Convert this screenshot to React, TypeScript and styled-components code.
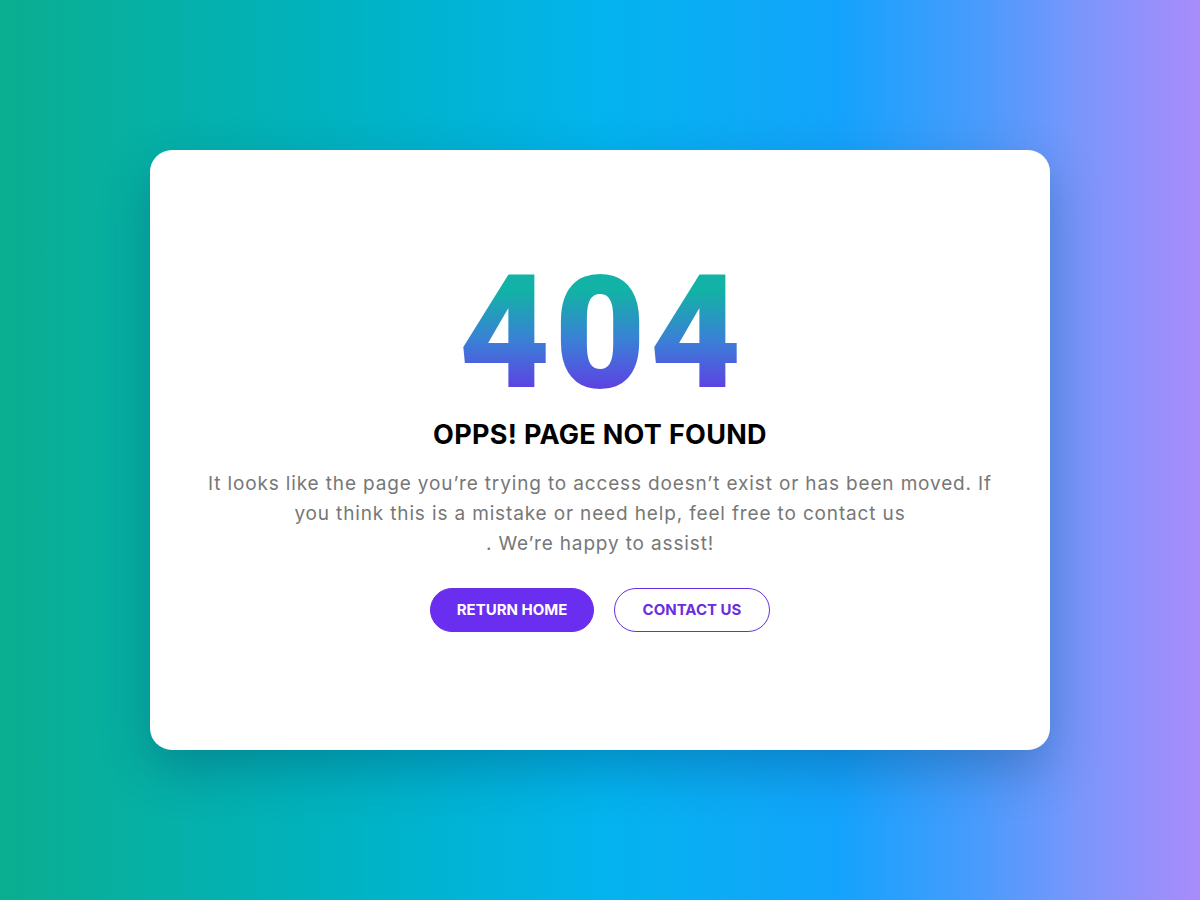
import React from "react";
import styled, { createGlobalStyle } from "styled-components";

const Global = createGlobalStyle`
  html, body { margin: 0; padding: 0; }
  body { font-family: Inter, "Noto Sans", sans-serif; }
`;

const Page = styled.div`
  width: 1200px;
  height: 900px;
  display: flex;
  align-items: center;
  justify-content: center;
  background: linear-gradient(
    to right,
    #0aae8f 0%,
    #00b3c4 30%,
    #03b4ee 50%,
    #14a3fc 70%,
    #4b9bfc 82%,
    #7a96fb 90%,
    #a98cfb 100%
  );
`;

const Card = styled.main`
  width: 900px;
  height: 600px;
  box-sizing: border-box;
  background: #fff;
  border-radius: 22px;
  box-shadow: 0 20px 50px rgba(0, 40, 80, 0.28);
  display: flex;
  flex-direction: column;
  align-items: center;
  justify-content: center;
  text-align: center;
  padding-bottom: 6px;
`;

const Code = styled.h1`
  margin: 0;
  font-family: Roboto, Inter, sans-serif;
  font-weight: 900;
  font-size: 158px;
  line-height: 140px;
  letter-spacing: 4px;
  padding-left: 4px;
  background: linear-gradient(to bottom, #12b2a6 20%, #3a80d6 55%, #5b45e2 88%);
  -webkit-background-clip: text;
  background-clip: text;
  color: transparent;
`;

const Title = styled.h2`
  margin: 14px 0 0;
  font-family: Inter, sans-serif;
  font-weight: 700;
  font-size: 27px;
  line-height: 36px;
  letter-spacing: 0.3px;
  color: #000;
`;

const Text = styled.p`
  margin: 16px 0 0;
  font-family: Inter, sans-serif;
  font-size: 19px;
  line-height: 30px;
  letter-spacing: 0.85px;
  color: #777;
`;

const Actions = styled.div`
  display: flex;
  gap: 20px;
  margin-top: 29px;
`;

const Button = styled.a<{ $outline?: boolean }>`
  display: inline-flex;
  align-items: center;
  justify-content: center;
  height: 44px;
  box-sizing: border-box;
  border-radius: 22px;
  font-family: Inter, sans-serif;
  font-weight: 700;
  font-size: 15px;
  text-decoration: none;
  cursor: pointer;
  background: ${(p) => (p.$outline ? "#fff" : "#6a2ef0")};
  color: ${(p) => (p.$outline ? "#6a2ee0" : "#fff")};
  border: 1px solid #6a2ee0;
  width: ${(p) => (p.$outline ? "156px" : "164px")};
`;

export default function App() {
  return (
    <>
      <Global />
      <Page>
        <Card>
          <Code>404</Code>
          <Title>OPPS! PAGE NOT FOUND</Title>
          <Text>
            It looks like the page you’re trying to access doesn’t exist or has been moved. If
            <br />
            you think this is a mistake or need help, feel free to contact us
            <br />. We’re happy to assist!
          </Text>
          <Actions>
            <Button>RETURN HOME</Button>
            <Button $outline>CONTACT US</Button>
          </Actions>
        </Card>
      </Page>
    </>
  );
}
